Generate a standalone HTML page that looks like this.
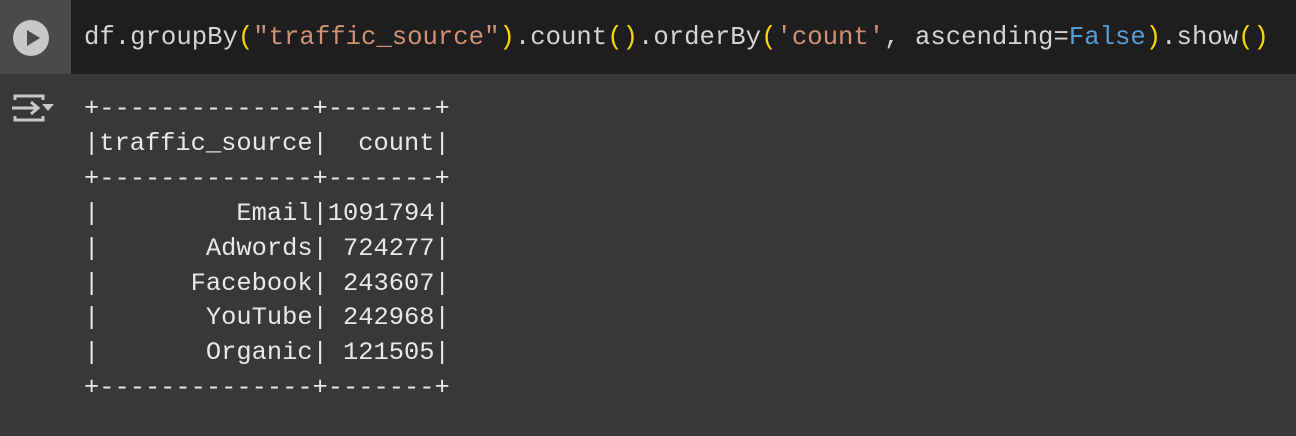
<!DOCTYPE html>
<html><head><meta charset="utf-8"><style>
html,body{margin:0;padding:0;width:1296px;height:436px;overflow:hidden;background:#383838;font-family:"Liberation Mono",monospace;}
.top{position:absolute;left:0;top:0;width:1296px;height:74px;background:#1e1e1e;}
.gut{position:absolute;left:0;top:0;width:71px;height:74px;background:#4a4a4a;}
.play{position:absolute;left:13px;top:20px;width:36px;height:36px;border-radius:50%;background:#c8c8c8;}
.play:after{content:"";position:absolute;left:14px;top:10px;border-left:13px solid #4a4a4a;border-top:8px solid transparent;border-bottom:8px solid transparent;}
.code{position:absolute;left:84px;top:21px;font-size:25.65px;line-height:34px;color:#d4d4d4;white-space:pre;}
.y{color:#ffd700}.s{color:#ce9178}.b{color:#569cd6}
.out{position:absolute;left:84px;top:92px;font-size:25.4px;line-height:34.9px;color:#e8e8e8;white-space:pre;}
</style></head><body>
<div class="top"><div class="gut"><div class="play"></div></div>
<div class="code">df.groupBy<span class="y">(</span><span class="s">"traffic_source"</span><span class="y">)</span>.count<span class="y">()</span>.orderBy<span class="y">(</span><span class="s">'count'</span>, ascending=<span class="b">False</span><span class="y">)</span>.show<span class="y">()</span></div></div>
<svg style="position:absolute;left:10px;top:92px" width="46" height="36" viewBox="0 0 46 36">
<path d="M5 8 V4 H33 V8 M5 24 V28 H33 V24" fill="none" stroke="#c8c8c8" stroke-width="3"/>
<path d="M2 16 H28 M21 10 L28 16 L21 22" fill="none" stroke="#c8c8c8" stroke-width="3"/>
<path d="M32 12 H44 L38 19 Z" fill="#c8c8c8"/>
</svg>
<div class="out">+--------------+-------+
|traffic_source|  count|
+--------------+-------+
|         Email|1091794|
|       Adwords| 724277|
|      Facebook| 243607|
|       YouTube| 242968|
|       Organic| 121505|
+--------------+-------+</div>
</body></html>
